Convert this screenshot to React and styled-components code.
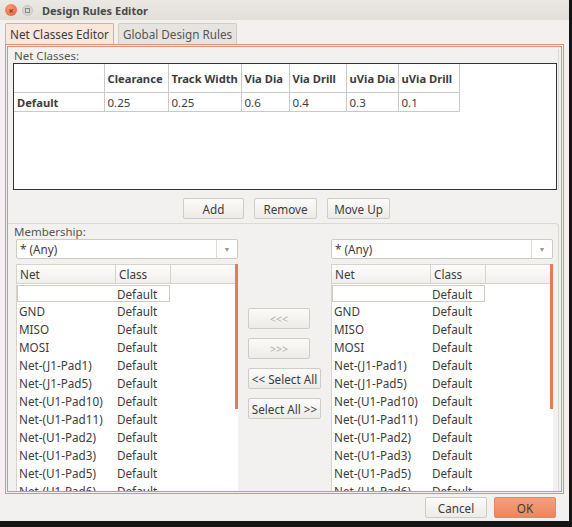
import React from "react";
import styled, { createGlobalStyle } from "styled-components";

// ========== DATA ===========
const columns = [
  { label: "Clearance", width: 64 },
  { label: "Track Width", width: 73 },
  { label: "Via Dia", width: 48 },
  { label: "Via Drill", width: 57 },
  { label: "uVia Dia", width: 52 },
  { label: "uVia Drill", width: 61 }
];

const defaultRow = ["0.25", "0.25", "0.6", "0.4", "0.3", "0.1"];

const nets = [
  "",
  "GND",
  "MISO",
  "MOSI",
  "Net-(J1-Pad1)",
  "Net-(J1-Pad5)",
  "Net-(U1-Pad10)",
  "Net-(U1-Pad11)",
  "Net-(U1-Pad2)",
  "Net-(U1-Pad3)",
  "Net-(U1-Pad5)",
  "Net-(U1-Pad6)"
];

// ========== STYLED COMPONENTS ===========
const GlobalStyle = createGlobalStyle`
  html, body {
    margin: 0;
    padding: 0;
    background: #141414;
  }
  body {
    font-family: "Noto Sans", "Open Sans", sans-serif;
    font-size: 11.5px;
    color: #3c3c3c;
  }
`;

const Window = styled.div`
  width: 569px;
  height: 521px;
  background: #f2f1f0;
  display: flex;
  flex-direction: column;
  overflow: hidden;
`;

const TitleBar = styled.div`
  height: 20px;
  display: flex;
  align-items: center;
  padding-left: 5px;
  gap: 5px;
  background: linear-gradient(#ebe9e5, #e2dfda);
`;

const CloseDot = styled.div`
  width: 12px;
  height: 12px;
  border-radius: 50%;
  background: radial-gradient(circle at 40% 35%, #f7a07c, #e0582c);
  display: flex;
  align-items: center;
  justify-content: center;
  color: #8a3418;
  font-size: 9px;
  font-weight: bold;
  line-height: 1;
`;

const MinDot = styled.div`
  width: 11px;
  height: 11px;
  border-radius: 50%;
  background: #d9d6d1;
  border: 1px solid #c7c3bd;
  box-sizing: border-box;
  display: flex;
  align-items: center;
  justify-content: center;

  &::after {
    content: "";
    width: 3px;
    height: 3px;
    border: 1px solid #8b8782;
  }
`;

const Title = styled.div`
  margin-left: 4px;
  font-weight: bold;
  font-size: 11px;
  color: #4a4a4a;
`;

const TabBar = styled.div`
  height: 24px;
  display: flex;
  align-items: flex-end;
  gap: 4px;
  padding: 0 5px;
`;

const Tab = styled.div`
  height: 21px;
  padding: 0 4px;
  display: flex;
  align-items: center;
  box-sizing: border-box;
  font-size: 11.7px;
  color: ${({ $active }) => ($active ? "#3a3a3a" : "#555")};
  background: ${({ $active }) => ($active ? "#fbe6dc" : "#e6e4e1")};
  border: 1px solid ${({ $active }) => ($active ? "#e8ab90" : "#d0ccc6")};
  border-bottom: none;
  border-radius: 2px 2px 0 0;
`;

const Panel = styled.div`
  margin: 0 5px;
  height: 450px;
  box-sizing: border-box;
  border: 3px double #de9272;
  display: flex;
  flex-direction: column;
  padding: 2px 2px 0 0;
`;

const BoxLabel = styled.div`
  font-size: 11.5px;
  color: #555;
  line-height: 13px;
  padding-left: ${({ $indent }) => $indent}px;
`;

const NetClassesBox = styled.div`
  display: flex;
  flex-direction: column;
  padding: 0 0 0 5px;
  border-right: 1px solid #dcd8d2;
`;

const Grid = styled.div`
  width: 544px;
  height: 127px;
  box-sizing: border-box;
  border: 1px solid #333;
  background: #fff;
  margin-top: 1px;
`;

const Table = styled.table`
  border-collapse: collapse;
  table-layout: fixed;
  width: 445px;
  font-size: 11.5px;
`;

const Col = styled.col`
  width: ${({ $w }) => $w}px;
`;

const HeadCell = styled.th`
  height: 28px;
  padding: 0 3px;
  text-align: left;
  font-weight: bold;
  font-size: 11.2px;
  color: #3c3c3c;
  border-right: 1px solid #c9c9c9;
  border-bottom: 1px solid #c9c9c9;
  white-space: nowrap;
  overflow: hidden;
`;

const RowLabel = styled.th`
  padding: 0 3px;
  text-align: left;
  font-weight: bold;
  font-size: 11.2px;
  border-right: 1px solid #c9c9c9;
  border-bottom: 1px solid #c9c9c9;
  height: 18px;
`;

const Cell = styled.td`
  padding: 0 3px;
  height: 18px;
  border-right: 1px solid #c9c9c9;
  border-bottom: 1px solid #c9c9c9;
`;

const CornerCell = styled.th`
  border-right: 1px solid #c9c9c9;
  border-bottom: 1px solid #c9c9c9;
`;

const ButtonRow = styled.div`
  display: flex;
  justify-content: center;
  gap: 10px;
  padding: 8px 0 4px;
  margin-left: 6px;
`;

const Button = styled.div`
  height: 21px;
  width: ${({ $w }) => $w}px;
  box-sizing: border-box;
  display: flex;
  align-items: center;
  justify-content: center;
  border: 1px solid ${({ $primary }) => ($primary ? "#e38560" : "#cfcbc5")};
  border-radius: 2px;
  background: ${({ $primary }) =>
    $primary ? "linear-gradient(#f5a07e, #ee855c)" : "linear-gradient(#fbfbfa, #edebe8)"};
  color: ${({ $disabled }) => ($disabled ? "#b0aca6" : "#3c3c3c")};
  font-size: ${({ $small }) => ($small ? "10.5px" : "11.7px")};
  white-space: nowrap;
`;

const MembershipBox = styled.div`
  flex: 1;
  display: flex;
  flex-direction: column;
  border-top: 1px solid #dcd8d2;
  border-right: 1px solid #dcd8d2;
  border-radius: 0 4px 0 0;
  padding-top: 1px;
  min-height: 0;
`;

const MemberRow = styled.div`
  flex: 1;
  display: flex;
  gap: 10px;
  padding: 1px 0 0 8px;
  min-height: 0;
`;

const Side = styled.div`
  width: 222px;
  display: flex;
  flex-direction: column;
  gap: 5px;
  min-height: 0;
`;

const Combo = styled.div`
  height: 20px;
  box-sizing: border-box;
  border: 1px solid #cdc9c3;
  border-radius: 2px;
  background: #fff;
  display: flex;
  align-items: center;
`;

const ComboText = styled.div`
  flex: 1;
  padding-left: 3px;
  font-size: 11.7px;
`;

const ComboArrow = styled.div`
  width: 20px;
  height: 18px;
  border-left: 1px solid #dcd8d2;
  display: flex;
  align-items: center;
  justify-content: center;
  color: #9b9791;
  font-size: 7px;
`;

const List = styled.div`
  position: relative;
  flex: 1;
  background: #fff;
  border-left: 1px solid #d6d2cc;
  overflow: hidden;
`;

const ListHeader = styled.div`
  height: 18px;
  display: flex;
  background: linear-gradient(#fdfdfc, #f1efec);
  border-bottom: 1px solid #d6d2cc;
  border-top: 1px solid #d6d2cc;
`;

const HeaderCol = styled.div`
  width: ${({ $w }) => $w}px;
  padding-left: ${({ $pad }) => $pad}px;
  box-sizing: border-box;
  border-right: 1px solid #d6d2cc;
  display: flex;
  align-items: center;
  font-size: 11.7px;
`;

const ListRow = styled.div`
  height: 18px;
  display: flex;
  align-items: center;
  font-size: 11.7px;
  white-space: nowrap;
`;

const FocusCell = styled.div`
  width: 153px;
  height: 17px;
  margin-top: 1px;
  box-sizing: border-box;
  border: 1px solid #cfcbc5;
  display: flex;
  align-items: center;
  padding-left: 99px;
`;

const NetName = styled.div`
  width: 100px;
  padding-left: 2px;
  box-sizing: border-box;
`;

const ScrollThumb = styled.div`
  position: absolute;
  right: 0;
  top: 0;
  width: 3px;
  height: 145px;
  background: #de7f56;
`;

const Middle = styled.div`
  width: 73px;
  display: flex;
  flex-direction: column;
  gap: 9px;
  padding-top: 69px;
`;

const Footer = styled.div`
  height: 27px;
  display: flex;
  justify-content: flex-end;
  align-items: center;
  gap: 7px;
  padding-right: 13px;
`;

// ========== COMPONENT ===========
const NetList = () => (
  <List>
    <ListHeader>
      <HeaderCol $w={99} $pad={3}>Net</HeaderCol>
      <HeaderCol $w={55} $pad={3}>Class</HeaderCol>
    </ListHeader>
    {nets.map((net, index) =>
      index === 0 ? (
        <ListRow key={index}>
          <FocusCell>Default</FocusCell>
        </ListRow>
      ) : (
        <ListRow key={index}>
          <NetName>{net}</NetName>
          <div>Default</div>
        </ListRow>
      )
    )}
    <ScrollThumb />
  </List>
);

const App = () => {
  return (
    <>
      <GlobalStyle />
      <Window>
        <TitleBar>
          <CloseDot>×</CloseDot>
          <MinDot />
          <Title>Design Rules Editor</Title>
        </TitleBar>

        <TabBar>
          <Tab $active>Net Classes Editor</Tab>
          <Tab>Global Design Rules</Tab>
        </TabBar>

        <Panel>
          <NetClassesBox>
            <BoxLabel $indent={1}>Net Classes:</BoxLabel>
            <Grid>
              <Table>
                <colgroup>
                  <Col $w={90} />
                  {columns.map((col) => (
                    <Col key={col.label} $w={col.width} />
                  ))}
                </colgroup>
                <thead>
                  <tr>
                    <CornerCell />
                    {columns.map((col) => (
                      <HeadCell key={col.label}>{col.label}</HeadCell>
                    ))}
                  </tr>
                </thead>
                <tbody>
                  <tr>
                    <RowLabel>Default</RowLabel>
                    {defaultRow.map((v, i) => (
                      <Cell key={i}>{v}</Cell>
                    ))}
                  </tr>
                </tbody>
              </Table>
            </Grid>
          </NetClassesBox>

          <ButtonRow>
            <Button $w={61}>Add</Button>
            <Button $w={63}>Remove</Button>
            <Button $w={63}>Move Up</Button>
          </ButtonRow>

          <MembershipBox>
            <BoxLabel $indent={6}>Membership:</BoxLabel>
            <MemberRow>
              <Side>
                <Combo>
                  <ComboText>* (Any)</ComboText>
                  <ComboArrow>▼</ComboArrow>
                </Combo>
                <NetList />
              </Side>

              <Middle>
                <Button $w={62} $disabled $small>&lt;&lt;&lt;</Button>
                <Button $w={62} $disabled $small>&gt;&gt;&gt;</Button>
                <Button $w={73}>&lt;&lt; Select All</Button>
                <Button $w={73}>Select All &gt;&gt;</Button>
              </Middle>

              <Side>
                <Combo>
                  <ComboText>* (Any)</ComboText>
                  <ComboArrow>▼</ComboArrow>
                </Combo>
                <NetList />
              </Side>
            </MemberRow>
          </MembershipBox>
        </Panel>

        <Footer>
          <Button $w={62}>Cancel</Button>
          <Button $w={62} $primary>OK</Button>
        </Footer>
      </Window>
    </>
  );
};

export default App;
